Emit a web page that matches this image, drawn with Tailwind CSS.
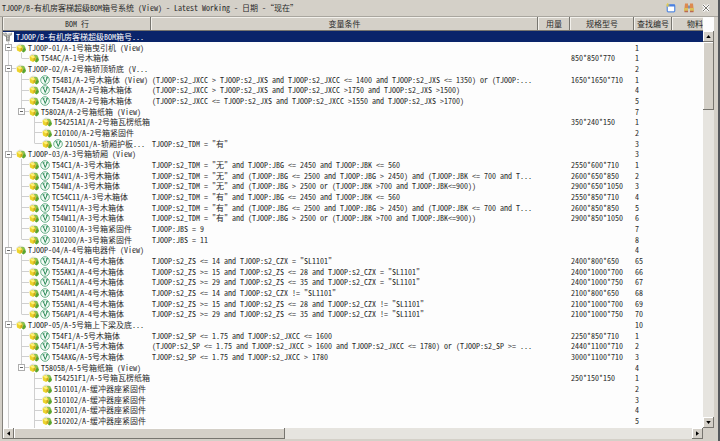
<!DOCTYPE html>
<html lang="zh-CN">
<head>
<meta charset="utf-8">
<meta name="viewport" content="width=device-width, initial-scale=1">
<title>BOM</title>
<script src="https://cdn.jsdelivr.net/npm/@tailwindcss/browser@4"></script>
</head>
<body class="h-screen overflow-hidden bg-[#d4d0c8] text-[8px] leading-[10px] text-[#2a2a2a] font-['Noto_Sans_CJK_SC',sans-serif] [font-feature-settings:'hwid']">
<svg class="hidden">
  <symbol id="part" viewBox="0 0 20 20">
    <path d="M1 5l6-4 6 1 4 3-3 6-9 1z" fill="#dfe3d4"/>
    <path d="M10 4l6 0 3 5-2 3-6-2z" fill="#8cc152"/>
    <path d="M1 7l6-3 6 4 0 7-5 3-6-3z" fill="#ecd32c"/>
    <path d="M2 7l5-2 5 3-4 3z" fill="#fff07a"/>
    <path d="M13 12l4-3 3 3-1 4-4 3-3-2z" fill="#5aa52e"/>
    <path d="M9 11l4-2 0 5-4 3z" fill="#c9a51c"/>
  </symbol>
  <symbol id="var" viewBox="0 0 20 20">
    <circle cx="10" cy="10" r="8.600" fill="#f4fbf6" stroke="#5aa97e" stroke-width="1.800"/>
    <path d="M5 5.500h4M12 5.500h4M7 6l3.500 9L14 6" fill="none" stroke="#2b8a58" stroke-width="2"/>
  </symbol>
  <symbol id="root" viewBox="0 0 20 20">
    <path d="M0 2l6-1 3 3 9-3v5l-4 2-1 11H7L6 10 1 7z" fill="#a3a39e"/>
    <path d="M2 3l5 3 9-3M8 8l4 2M8 12l4 2" fill="none" stroke="#e4e4de" stroke-width="1.500"/>
    <path d="M7 7v11M12 8v10" stroke="#6c6c68" stroke-width="1.200"/>
  </symbol>
</svg>

<div class="flex h-full flex-col border-r-2 border-[#55585c]">
  <header class="flex h-[17px] shrink-0 items-center justify-between border-b border-[#a9a69f] pl-[2px] pr-[8px]">
    <h1 class="whitespace-nowrap">TJOOP/B-有机房客梯超级BOM箱号系统 (View) - Latest Working - 日期 -“现在”</h1>
    <div class="flex items-center gap-[8px]">
      <button aria-label="新窗口" class="size-[10px]"><svg viewBox="0 0 20 20" class="block size-full"><rect x="2.500" y="3.500" width="15" height="14" rx="2" fill="#fff" stroke="#5b8de0" stroke-width="2.500"/><path d="M2 5h16" stroke="#4a7fe0" stroke-width="4"/><path d="M0 4h7M3.500 0v8" stroke="#e8cf4c" stroke-width="2"/></svg></button>
      <button aria-label="比较" class="size-[10px]"><svg viewBox="0 0 20 20" class="block size-full"><path d="M2 1h6v9H1zM12 1h6l1 9h-7z" fill="#dc8a50"/><path d="M8 5h4v6H8z" fill="#8292aa"/><path d="M0 10h8v7H0zM12 10h8v7h-8z" fill="#dcc05c"/><path d="M1 17h7M12 17h7" stroke="#b86a55" stroke-width="3"/></svg></button>
      <button aria-label="关闭" class="size-[8px]"><svg viewBox="0 0 16 16" class="block size-full"><path d="M2 2l12 12M14 2L2 14" stroke="#fff" stroke-width="5"/><path d="M2 2l12 12M14 2L2 14" stroke="#77756f" stroke-width="2"/></svg></button>
    </div>
  </header>

  <main class="mr-[4px] ml-[2px] mb-[2px] grid min-h-0 flex-1 grid-cols-[minmax(0,1fr)_11px] grid-rows-[minmax(0,1fr)_11px] border-l border-[#85837d]">
    <div class="overflow-hidden bg-[#fdfdfd]">
      <table class="w-full table-fixed border-collapse whitespace-nowrap">
        <colgroup><col class="w-[148px]"><col><col class="w-[32px]"><col class="w-[64px]"><col class="w-[38px]"><col class="w-[31px]"></colgroup>
        <thead class="bg-[#d4d0c8] [&_th]:h-[14px] [&_th]:overflow-hidden [&_th]:p-0 [&_th]:font-normal [&_th]:shadow-[inset_-1px_-1px_#77756f,inset_1px_1px_#f3f1ec] [&_th:last-child]:text-right [&_th:last-child]:shadow-[inset_0_-1px_#77756f,inset_1px_1px_#f3f1ec]">
          <tr><th>BOM 行</th><th>变量条件</th><th>用量</th><th>规格型号</th><th>查找编号</th><th>物料</th></tr>
        </thead>
        <tbody id="rows" class="[&>tr]:h-[11px] [&>tr:nth-child(3n)]:h-[10px] [&_td]:overflow-hidden [&_td]:py-0 [&_td]:pr-0 [&_td]:pl-[1px] [&_td:first-child]:pl-0"></tbody>
      </table>
    </div>
    <div class="flex flex-col bg-[#e6e4df]">
      <div class="h-[14px] bg-[#fdfdfd]"></div>
      <button aria-label="向上" class="grid h-[11px] place-items-center bg-[#d4d0c8] shadow-[inset_-1px_-1px_#77756f,inset_1px_1px_#fff]"><svg viewBox="0 0 6 4" class="h-[3px] w-[5px]"><path d="M0 4l3-4 3 4z"/></svg></button>
      <div class="min-h-0 flex-1"><div class="h-[18%] bg-[#d4d0c8] shadow-[inset_-1px_-1px_#77756f,inset_1px_1px_#fff]"></div></div>
      <button aria-label="向下" class="grid h-[11px] place-items-center bg-[#d4d0c8] shadow-[inset_-1px_-1px_#77756f,inset_1px_1px_#fff]"><svg viewBox="0 0 6 4" class="h-[3px] w-[5px]"><path d="M0 0l3 4 3-4z"/></svg></button>
    </div>
    <div class="flex bg-[#e6e4df]">
      <button aria-label="向左" class="grid w-[11px] place-items-center bg-[#d4d0c8] shadow-[inset_-1px_-1px_#77756f,inset_1px_1px_#fff]"><svg viewBox="0 0 4 6" class="h-[5px] w-[3px]"><path d="M4 0L0 3l4 3z"/></svg></button>
      <div class="flex-1"><div class="h-full w-[40%] bg-[#d4d0c8] shadow-[inset_-1px_-1px_#77756f,inset_1px_1px_#fff]"></div></div>
      <button aria-label="向右" class="grid w-[11px] place-items-center bg-[#d4d0c8] shadow-[inset_-1px_-1px_#77756f,inset_1px_1px_#fff]"><svg viewBox="0 0 4 6" class="h-[5px] w-[3px]"><path d="M0 0l4 3-4 3z"/></svg></button>
    </div>
    <div class="bg-[#d4d0c8]"></div>
  </main>
</div>

<script>
// level | variant flag | name | condition | size | find number
const data = `
0||TJOOP/B-有机房客梯超级BOM箱号...|||
1||TJOOP-01/A-1号箱曳引机 (View)|||1
2||T54AC/A-1号木箱体||850*850*770|1
1||TJOOP-02/A-2号箱轿顶轿底 (V...|||2
2|v|T54B1/A-2号木箱体 (View)|(TJOOP:s2_JXCC > TJOOP:s2_JXS and TJOOP:s2_JXCC <= 1400 and TJOOP:s2_JXS <= 1350) or (TJOOP:...|1650*1650*710|1
2|v|T54A2A/A-2号箱木箱体|(TJOOP:s2_JXCC > TJOOP:s2_JXS and TJOOP:s2_JXCC >1750 and TJOOP:s2_JXS >1500)||4
2|v|T54A2B/A-2号箱木箱体|(TJOOP:s2_JXCC <= TJOOP:s2_JXS and TJOOP:s2_JXCC >1550 and TJOOP:s2_JXS >1700)||5
2||T5802A/A-2号箱纸箱 (View)|||7
3||T54251A1/A-2号箱瓦楞纸箱||350*240*150|1
3||210100/A-2号箱紧固件|||2
3|v|210501/A-轿厢护板...|TJOOP:s2_TDM = "有"||3
1||TJOOP-03/A-3号箱轿厢 (View)|||3
2|v|T54C1/A-3号木箱体|TJOOP:s2_TDM = "无" and TJOOP:JBG <= 2450 and TJOOP:JBK <= 560|2550*600*710|1
2|v|T54V1/A-3号木箱体|TJOOP:s2_TDM = "无" and (TJOOP:JBG <= 2500 and TJOOP:JBG > 2450) and (TJOOP:JBK <= 700 and T...|2600*650*850|2
2|v|T54W1/A-3号木箱体|TJOOP:s2_TDM = "无" and (TJOOP:JBG > 2500 or (TJOOP:JBK >700 and TJOOP:JBK<=900))|2900*650*1050|3
2|v|TC54C11/A-3号木箱体|TJOOP:s2_TDM = "有" and TJOOP:JBG <= 2450 and TJOOP:JBK <= 560|2550*850*710|4
2|v|T54V11/A-3号木箱体|TJOOP:s2_TDM = "有" and (TJOOP:JBG <= 2500 and TJOOP:JBG > 2450) and (TJOOP:JBK <= 700 and T...|2600*850*850|5
2|v|T54W11/A-3号木箱体|TJOOP:s2_TDM = "有" and (TJOOP:JBG > 2500 or (TJOOP:JBK >700 and TJOOP:JBK<=900))|2900*850*1050|6
2|v|310100/A-3号箱紧固件|TJOOP:JBS = 9||7
2|v|310200/A-3号箱紧固件|TJOOP:JBS = 11||8
1||TJOOP-04/A-4号箱电器件 (View)|||4
2|v|T54AJ1/A-4号木箱体|TJOOP:s2_ZS <= 14 and TJOOP:s2_CZX = "SL1101"|2400*800*650|65
2|v|T55AK1/A-4号木箱体|TJOOP:s2_ZS >= 15 and TJOOP:s2_ZS <= 28 and TJOOP:s2_CZX = "SL1101"|2400*1000*700|66
2|v|T56AL1/A-4号木箱体|TJOOP:s2_ZS >= 29 and TJOOP:s2_ZS <= 35 and TJOOP:s2_CZX = "SL1101"|2400*1000*750|67
2|v|T54AM1/A-4号木箱体|TJOOP:s2_ZS <= 14 and TJOOP:s2_CZX != "SL1101"|2100*800*650|68
2|v|T55AN1/A-4号木箱体|TJOOP:s2_ZS >= 15 and TJOOP:s2_ZS <= 28 and TJOOP:s2_CZX != "SL1101"|2100*1000*700|69
2|v|T56AP1/A-4号木箱体|TJOOP:s2_ZS >= 29 and TJOOP:s2_ZS <= 35 and TJOOP:s2_CZX != "SL1101"|2100*1000*750|70
1||TJOOP-05/A-5号箱上下梁及底...|||10
2|v|T54F1/A-5号木箱体|TJOOP:s2_SP <= 1.75 and TJOOP:s2_JXCC <= 1600|2250*850*710|1
2|v|T54AF1/A-5号木箱体|(TJOOP:s2_SP <= 1.75 and TJOOP:s2_JXCC > 1600 and TJOOP:s2_JXCC <= 1780) or (TJOOP:s2_SP >= ...|2440*1100*710|2
2|v|T54AXG/A-5号木箱体|TJOOP:s2_SP <= 1.75 and TJOOP:s2_JXCC > 1780|3000*1100*710|3
2||T5805B/A-5号箱纸箱 (View)|||4
3||T54251F1/A-5号箱瓦楞纸箱||250*150*150|1
3||510101/A-缓冲器座紧固件|||2
3||510102/A-缓冲器座紧固件|||3
3||510201/A-缓冲器座紧固件|||4
3||510202/A-缓冲器座紧固件|||5
3||530100/A-5号箱紧固件|||`.trim().split('\n').map(l => l.split('|'));

const esc = s => s.replace(/&/g, '&amp;').replace(/</g, '&lt;').replace(/>/g, '&gt;');

// Whether the branch at depth d goes on below row i (the top branch runs past the last row)
function continues(i, d) {
  if (d === 1) return true;
  for (let j = i + 1; j < data.length; j++) {
    const level = +data[j][0];
    if (level < d) return false;
    if (level === d) return true;
  }
  return d === 3;
}

function guides(i, level, open) {
  let out = '';
  for (let d = 1; d <= level; d++) {
    const own = d === level, on = continues(i, d);
    let s = '';
    if (on) s += '<path d="M5.5 0v11"/>';
    else if (own) s += '<path d="M5.5 0v5.5"/>';
    if (own) s += '<path d="M6 5.5h7"/>';
    const lines = `<svg viewBox="0 0 13 11" class="block h-[11px] w-[13px] shrink-0" fill="none" stroke="#cfcfcf">${s}${own && open ? '<rect x="2.500" y="2.500" width="6" height="6" fill="#fff" stroke="#adadad"/><path d="M4 5.500h3" stroke="#666"/>' : ''}</svg>`;
    out += own && open ? `<button aria-label="折叠" class="shrink-0">${lines}</button>` : lines;
  }
  return out;
}

document.getElementById('rows').innerHTML = data.map(([lv, v, name, cond, size, no], i) => {
  const level = +lv;
  const open = level > 0 && data[i + 1] && +data[i + 1][0] > level;
  const icon = id => `<svg class="size-[10px] shrink-0"><use href="#${id}"/></svg>`;
  return `<tr class="${level ? '' : 'bg-[#0a246a] text-white'}">
    <td><div class="flex h-[10px] items-center">${guides(i, level, open)}${level ? icon('part') : '<span class="mr-[1px] flex bg-white pr-[1px]">' + icon('root') + '</span>'}${v ? '<span class="ml-[1px] flex">' + icon('var') + '</span>' : ''}<span class="${level ? 'pl-[2px]' : 'pl-[1px]'}">${esc(name)}</span></div></td>
    <td>${esc(cond)}</td><td></td><td>${size}</td><td>${no}</td><td></td></tr>`;
}).join('');
</script>
</body>
</html>
